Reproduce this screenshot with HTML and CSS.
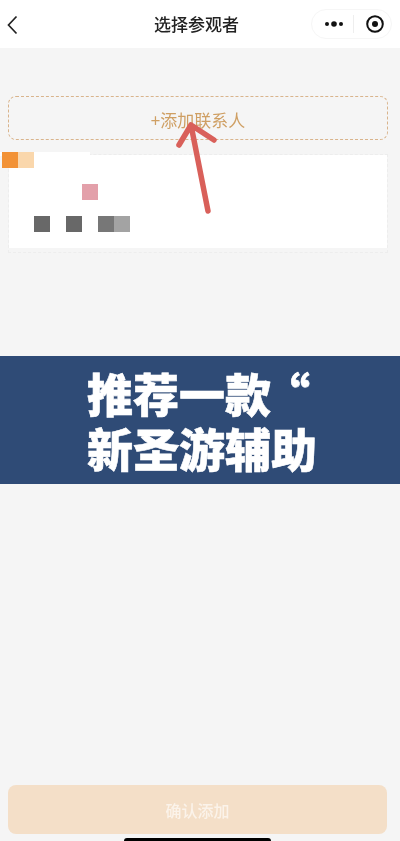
FILE: index.html
```html
<!DOCTYPE html>
<html lang="zh-CN">
<head>
<meta charset="utf-8">
<title>选择参观者</title>
<link rel="stylesheet" href="styles.css">
</head>
<body>
<div class="page">
  <header class="nav">
    <svg class="back" width="12" height="20" viewBox="0 0 12 20"><path d="M9.500 1.500 1.500 10l8 8.500" fill="none" stroke="#222" stroke-width="1.700"/></svg>
    <h1 class="title">选择参观者</h1>
    <div class="capsule">
      <svg class="more" width="20" height="8" viewBox="0 0 20 8"><circle cx="3" cy="4" r="2" fill="#111"/><circle cx="10" cy="4" r="2.800" fill="#111"/><circle cx="17" cy="4" r="2" fill="#111"/></svg>
      <span class="divider"></span>
      <svg class="target" width="20" height="20" viewBox="0 0 20 20"><circle cx="10" cy="10" r="7.800" fill="none" stroke="#111" stroke-width="2"/><circle cx="10" cy="10" r="3" fill="#111"/></svg>
    </div>
  </header>

  <main class="content">
    <div class="add">+添加联系人</div>
    <section class="card">
      <div class="mosaic">
        <i class="px orange"></i><i class="px peach"></i>
        <i class="px pink"></i>
        <i class="px dark d1"></i><i class="px dark d2"></i><i class="px mid"></i><i class="px light"></i>
      </div>
    </section>
    <svg class="arrow" width="50" height="100" viewBox="0 0 50 100"><path d="M38 89 21 3M9 23 21 3 44 18" fill="none" stroke="#d9605a" stroke-width="5.500" stroke-linecap="round" stroke-linejoin="round"/></svg>
  </main>

  <div class="banner">
    <p class="banner-text">推荐一款<span class="quote">“</span><br>新圣游辅助</p>
  </div>

  <footer class="footer">
    <button class="confirm" type="button">确认添加</button>
    <div class="home"></div>
  </footer>
</div>
</body>
</html>
```

FILE: styles.css
```css
* { box-sizing: border-box; }
html, body { margin: 0; padding: 0; }
body {
  background: #f5f5f5;
  font-family: "Noto Sans CJK SC", "Noto Sans", sans-serif;
}
.page {
  width: 400px;
  height: 841px;
  display: flex;
  flex-direction: column;
  overflow: hidden;
  filter: blur(0.35px);
}
.nav {
  position: relative;
  height: 48px;
  flex: none;
  background: #fff;
  display: flex;
  align-items: center;
  justify-content: space-between;
  padding: 0 8px 0 6px;
}
.back { display: block; margin: 2px 0 0 1px; }
.title {
  position: absolute;
  left: 0;
  right: 7px;
  top: 11px;
  margin: 0;
  text-align: center;
  font-size: 17px;
  line-height: 26px;
  font-weight: 500;
  color: #222;
}
.capsule {
  width: 81px;
  height: 30px;
  margin-top: -1px;
  border: 1px solid #f6f6f6;
  border-radius: 15px;
  display: flex;
  align-items: center;
  padding-left: 12px;
}
.more { display: block; }
.divider { width: 1px; height: 18px; background: #eee; margin-left: 9px; }
.target { display: block; margin-left: 11px; }

.content {
  position: relative;
  height: 308px;
  flex: none;
  padding: 48px 12px 0 8px;
}
.add {
  height: 44px;
  border: 1px dashed #d9b48c;
  border-radius: 8px;
  display: flex;
  align-items: center;
  justify-content: center;
  font-size: 17px;
  color: #cf9f63;
  padding-top: 2px;
}
.card {
  height: 99px;
  margin-top: 14px;
  border: 1px dashed #ededed;
  background: linear-gradient(#fff, #fff) 0 0 / 100% 93px no-repeat;
}
.mosaic {
  position: absolute;
  left: 0;
  top: 104px;
  width: 90px;
  height: 80px;
  background: linear-gradient(#fff, #fff) 0 0 / 90px 4px no-repeat;
}
.px { position: absolute; width: 16px; height: 16px; display: block; }
.orange { left: 2px; top: 0; background: #f29236; }
.peach { left: 18px; top: 0; background: #fad7ac; }
.pink { left: 82px; top: 32px; background: #e3a0aa; }
.dark { top: 64px; background: #686868; }
.d1 { left: 34px; }
.d2 { left: 66px; }
.mid { left: 98px; top: 64px; background: #777; }
.light { left: 114px; top: 64px; background: #a3a3a3; }
.arrow { position: absolute; left: 170px; top: 74px; }

.banner {
  height: 128px;
  flex: none;
  background: #2f4b76;
  padding: 9px 0 0 87px;
}
.banner-text {
  margin: 0;
  font-size: 46px;
  line-height: 55px;
  font-weight: 900;
  color: #fff;
  white-space: nowrap;
  -webkit-text-stroke: 0.6px #fff;
}
.quote { margin-left: -7px; }

.footer {
  flex: 1;
  display: flex;
  flex-direction: column;
  justify-content: flex-end;
  padding: 0 13px 0 8px;
}
.confirm {
  width: 379px;
  height: 49px;
  border: 0;
  border-radius: 8px;
  background: #f4dfc8;
  color: #fbf3ea;
  font: 500 16px "Noto Sans CJK SC", sans-serif;
  padding: 0;
  margin-bottom: 4px;
}
.home {
  width: 147px;
  height: 3px;
  margin-left: 116px;
  background: #000;
  border-radius: 3px 3px 0 0;
}
```
